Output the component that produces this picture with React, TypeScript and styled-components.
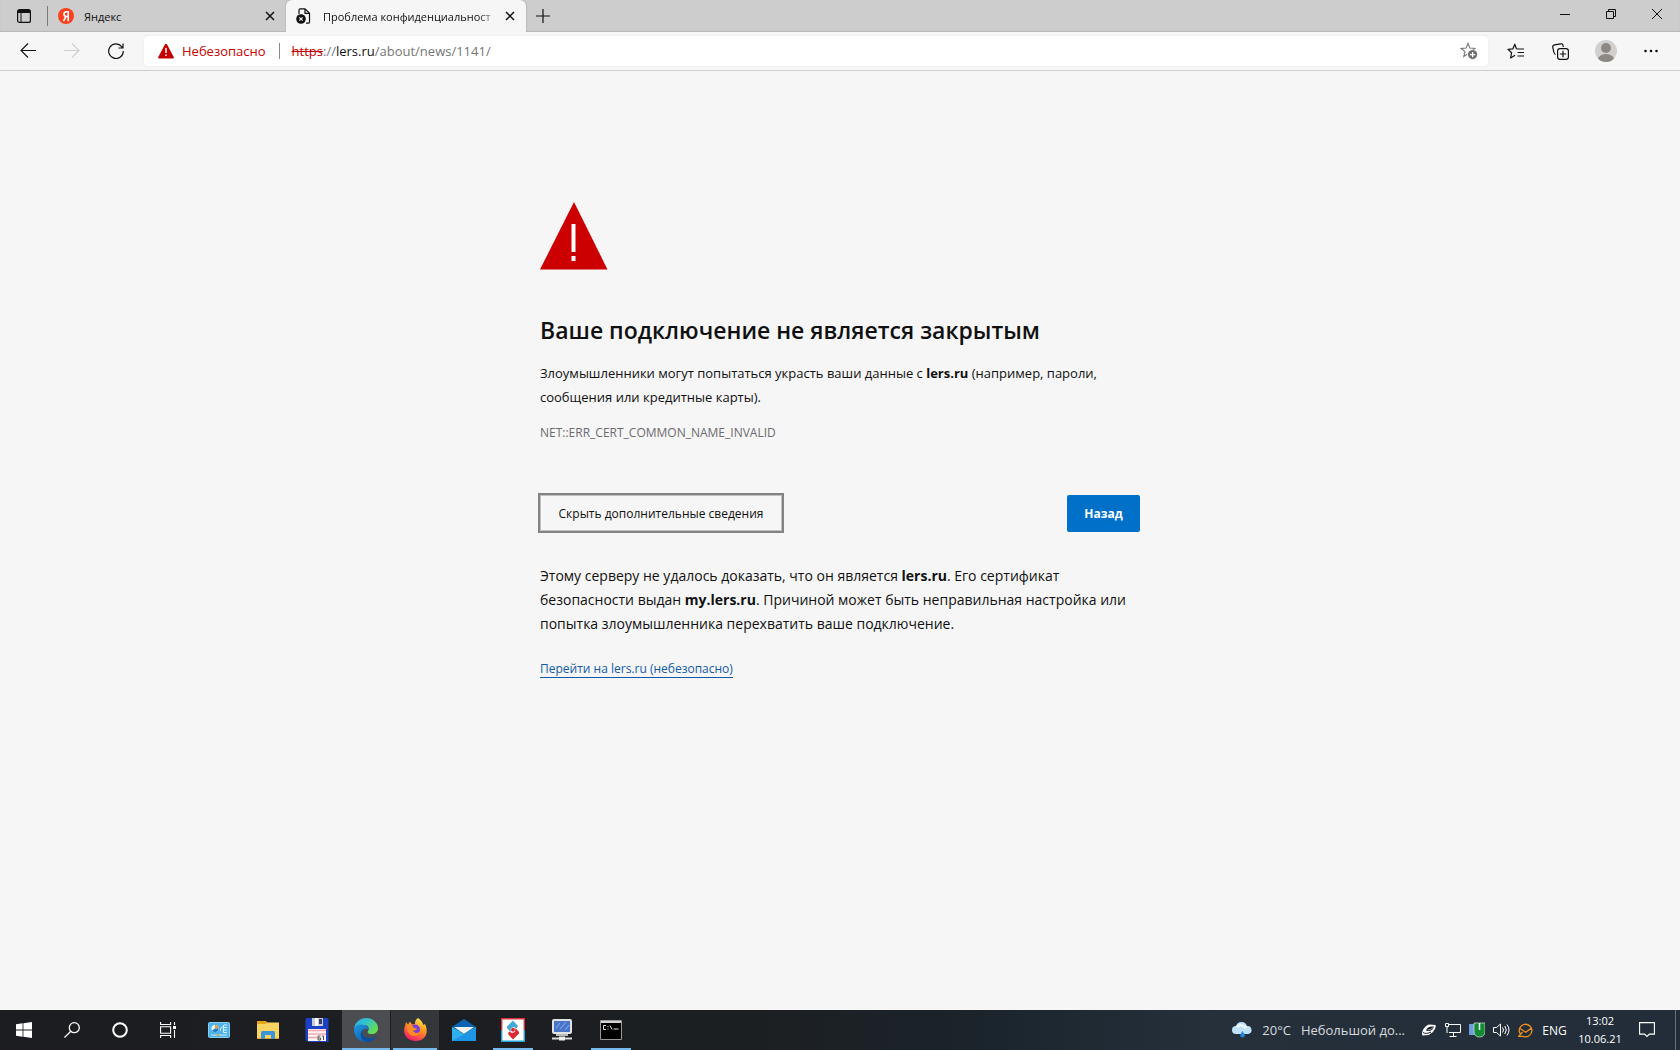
import React from "react";
import styled, { createGlobalStyle } from "styled-components";

const ui = '"Open Sans", "Noto Sans", sans-serif';

const GlobalStyle = createGlobalStyle`
  *, *::before, *::after { box-sizing: border-box; }
  body { margin: 0; background: #f6f6f6; font-family: ${ui}; color: #101010; }
  button { font: inherit; color: inherit; border: 0; padding: 0; background: none; cursor: default; }
  svg { display: block; flex: none; }
  p, h1 { margin: 0; }
`;

const Screen = styled.div`
  min-height: 100vh;
  display: flex;
  flex-direction: column;
`;

/* Tab strip */
const TabStrip = styled.header`
  display: flex;
  height: 32px;
  background: #cdcdcd;
  box-shadow: inset 0 -1px 1px #b9b9b9;
`;

const TabMenu = styled.button`
  display: grid;
  place-items: center;
  width: 48px;
  position: relative;
  &::after {
    content: "";
    position: absolute;
    right: 0;
    top: 6px;
    height: 20px;
    width: 1px;
    background: #7a7a7a;
  }
`;

const Tab = styled.div<{ $active?: boolean }>`
  display: flex;
  align-items: center;
  width: ${(p) => (p.$active ? 240 : 238)}px;
  padding: 0 8px 0 10px;
  border-radius: 6px 6px 0 0;
  background: ${(p) => (p.$active ? "#f6f6f6" : "transparent")};
  box-shadow: ${(p) => (p.$active ? "0 0 2px #999" : "none")};
`;

const TabLabel = styled.button<{ $fade?: boolean }>`
  display: flex;
  align-items: center;
  gap: ${(p) => (p.$fade ? 11 : 10)}px;
  flex: 1;
  min-width: 0;
  height: 100%;
  font-size: 11px;
  white-space: nowrap;
  overflow: hidden;
  text-align: left;
  ${(p) => p.$fade && "mask-image: linear-gradient(90deg, #000 calc(100% - 24px), transparent calc(100% - 2px));"}
`;

const IconButton = styled.button<{ $w: number }>`
  display: grid;
  place-items: center;
  flex: none;
  width: ${(p) => p.$w}px;
  height: 100%;
`;

const WindowControls = styled.div`
  display: flex;
  height: 28px;
  margin-left: auto;
`;

/* Toolbar */
const Toolbar = styled.nav`
  display: flex;
  align-items: center;
  height: 39px;
  padding: 0 7px 0 6px;
  background: #f6f6f6;
  border-bottom: 1px solid #d0d0d0;
`;

const AddressBar = styled.div`
  display: flex;
  align-items: center;
  flex: 1;
  height: 30px;
  margin: 0 5px 0 6px;
  padding: 0 5px 0 14px;
  border-radius: 4px;
  background: #fff;
  box-shadow: 0 0 2px #e2e2e2;
  font-size: 13px;
`;

const Unsafe = styled.button`
  display: flex;
  align-items: center;
  gap: 8px;
  padding-right: 13px;
  border-right: 1px solid #8a8a8a;
  line-height: 16px;
  color: #c50000;
`;

const Url = styled.div`
  flex: 1;
  padding-left: 12px;
  color: #767676;
  outline: none;
  s { color: #c50000; }
  b { color: #101010; font-weight: 400; }
`;

/* Interstitial page */
const Main = styled.main`
  flex: 1;
  padding: 131px 24px 48px;
  background: #f6f6f6;
`;

const Article = styled.article`
  max-width: 600px;
  margin: 0 auto;
`;

const Title = styled.h1`
  margin-top: 44px;
  font-size: 23px;
  line-height: 32px;
  font-weight: 600;
`;

const Lead = styled.p`
  margin-top: 15px;
  font-size: 13px;
  line-height: 24px;
`;

const ErrorCode = styled.p`
  margin-top: 12px;
  font-size: 12px;
  line-height: 24px;
  color: #6b6b70;
`;

const Actions = styled.div`
  display: flex;
  justify-content: space-between;
  margin-top: 50px;
`;

const DetailsButton = styled.button`
  height: 36px;
  width: 242px;
  border: 1px solid #c0c0c0;
  outline: 2px solid #838383;
  font-size: 12px;
`;

const BackButton = styled.button`
  height: 37px;
  width: 73px;
  border-radius: 2px;
  background: #0070c9;
  color: #fff;
  font-size: 12px;
  font-weight: 700;
`;

const Details = styled.p`
  margin-top: 32px;
  font-size: 14px;
  line-height: 24px;
`;

const Proceed = styled.a`
  display: inline-block;
  margin-top: 24px;
  font-size: 12px;
  line-height: 17px;
  color: #105aa8;
  text-decoration: none;
  border-bottom: 1px solid #105aa8;
`;

/* Taskbar */
const Taskbar = styled.footer`
  display: flex;
  height: 40px;
  background: linear-gradient(90deg, #1c1d20 0%, #1c1f22 45%, #1b242b 58%, #25303b 72%, #222d39 100%);
  color: #fff;
`;

const Group = styled.div<{ $gap?: number; $left?: number }>`
  display: flex;
  gap: ${(p) => p.$gap ?? 0}px;
  margin-left: ${(p) => p.$left ?? 0}px;
`;

const TaskButton = styled.button<{ $bg?: string; $line?: number }>`
  position: relative;
  display: grid;
  place-items: center;
  width: 48px;
  height: 40px;
  background: ${(p) => p.$bg ?? "transparent"};
  &::after {
    content: "";
    position: absolute;
    bottom: 0;
    left: calc(50% - ${(p) => (p.$line ?? 0) / 2}px);
    width: ${(p) => p.$line ?? 0}px;
    height: 2px;
    background: #76b9ed;
  }
`;

const Tray = styled.div`
  display: flex;
  align-items: center;
  margin-left: auto;
  font-size: 12px;
`;

const Weather = styled.button`
  display: flex;
  align-items: center;
  gap: 10px;
  margin-right: 12px;
  font-size: 13px;
  color: #d9dcdf;
`;

const Clock = styled.time`
  width: 56px;
  text-align: center;
  font-size: 11px;
  line-height: 18px;
`;

const ShowDesktop = styled.button`
  width: 5px;
  height: 40px;
  margin-left: 9px;
  border-left: 1px solid #66707a;
`;

const star = "M8 1.5 9.9 6.1 14.8 6.5 11 9.6 12.2 14.5 8 11.8 3.8 14.5 5 9.6 1.2 6.5 6.1 6.1Z";

const Close = () => (
  <svg width="10" height="10" viewBox="0 0 10 10" stroke="#111" strokeWidth="1.5"><path d="M1 1 9 9M9 1 1 9" /></svg>
);

function Tabs() {
  return (
    <TabStrip>
      <TabMenu aria-label="Меню вкладок">
        <svg width="14" height="14" viewBox="0 0 14 14"><rect x=".6" y=".6" width="12.8" height="12.8" rx="2" fill="none" stroke="#111" strokeWidth="1.2" /><path d="M1 1h12v3H1z" fill="#111" /><path d="M4 4v9" stroke="#111" /></svg>
      </TabMenu>
      <Tab>
        <TabLabel>
          <svg width="16" height="16" viewBox="0 0 16 16"><circle cx="8" cy="8" r="8" fill="#fc3f1d" /><path d="M10.2 3v10.2M10.2 3.7H8.5c-3.3 0-3.3 4.8 0 4.8h1.7M8 8.5 5.5 13.2" fill="none" stroke="#fff" strokeWidth="1.6" /></svg>
          Яндекс
        </TabLabel>
        <IconButton $w={16} aria-label="Закрыть"><Close /></IconButton>
      </Tab>
      <Tab $active>
        <TabLabel $fade>
          <svg width="16" height="16" viewBox="0 0 16 16"><path d="M3 6V2.2C3 1.4 3.4.8 4.2.8H9l4.5 4.5v8.6c0 .8-.5 1.3-1.3 1.3H10M9 .8v4.5h4.5" fill="none" stroke="#111" strokeWidth="1.2" /><circle cx="5" cy="11" r="4.8" fill="#111" /><path d="m3.3 9.3 3.4 3.4m0-3.4-3.4 3.4" stroke="#f6f6f6" strokeWidth="1.1" /></svg>
          Проблема конфиденциальност
        </TabLabel>
        <IconButton $w={16} aria-label="Закрыть"><Close /></IconButton>
      </Tab>
      <IconButton $w={34} aria-label="Новая вкладка">
        <svg width="14" height="14" viewBox="0 0 14 14" stroke="#111" strokeWidth="1.2"><path d="M7 0v14M0 7h14" /></svg>
      </IconButton>
      <WindowControls>
        <IconButton $w={46} aria-label="Свернуть"><svg width="10" height="10" viewBox="0 0 10 10"><path d="M0 5.5h10" stroke="#111" /></svg></IconButton>
        <IconButton $w={46} aria-label="Свернуть в окно"><svg width="10" height="10" viewBox="0 0 10 10" fill="none" stroke="#111"><path d="M.5 2.5h7v7h-7zM2.5 2.5v-2h7v7h-2" /></svg></IconButton>
        <IconButton $w={46} aria-label="Закрыть окно"><svg width="10" height="10" viewBox="0 0 10 10"><path d="m0 0 10 10M10 0 0 10" stroke="#111" /></svg></IconButton>
      </WindowControls>
    </TabStrip>
  );
}

function Navigation() {
  return (
    <Toolbar>
      <IconButton $w={44} aria-label="Назад">
        <svg width="16" height="16" viewBox="0 0 16 16" fill="none" stroke="#111" strokeWidth="1.1"><path d="M16 7.500H1M8 .5l-7 7 7 7" /></svg>
      </IconButton>
      <IconButton $w={44} aria-label="Вперёд">
        <svg width="16" height="16" viewBox="0 0 16 16" fill="none" stroke="#cfcfcf" strokeWidth="1.1"><path d="M0 7.500h15M8 .5l7 7-7 7" /></svg>
      </IconButton>
      <IconButton $w={44} aria-label="Обновить">
        <svg width="16" height="16" viewBox="0 0 16 16" fill="none" stroke="#111" strokeWidth="1.2"><path d="M15.3 8A7.3 7.3 0 1 1 13.7 3.6L15 5M15 .5V5h-4.5" /></svg>
      </IconButton>
      <AddressBar>
        <Unsafe>
          <svg width="16" height="16" viewBox="0 0 16 16"><path d="M7 1.3Q8 0 9 1.3L15.7 14Q16.2 15.4 15 15.5H1Q-.2 15.4.3 14Z" fill="#c50000" /><path d="M8 5v5M8 11.5v1.6" stroke="#fff" strokeWidth="1.5" /></svg>
          Небезопасно
        </Unsafe>
        <Url role="textbox" aria-label="Адрес" contentEditable suppressContentEditableWarning>
          <s>https</s>://<b>lers.ru</b>/about/news/1141/
        </Url>
        <IconButton $w={28} aria-label="В избранное">
          <svg width="18" height="18" viewBox="0 0 18 18"><path d={star} fill="none" stroke="#767676" strokeWidth="1.1" /><circle cx="12.6" cy="12.6" r="5.2" fill="#fff" /><circle cx="12.6" cy="12.6" r="4.6" fill="#707070" /><path d="M12.6 10v5.2M10 12.6h5.2" stroke="#fff" strokeWidth="1.2" /></svg>
        </IconButton>
      </AddressBar>
      <IconButton $w={45} aria-label="Избранное">
        <svg width="17" height="17" viewBox="0 0 17 17" fill="none" stroke="#111" strokeWidth="1.2"><path d="M9.5 6 7.8 1.2 5.8 5.9 1 6.4l3.6 3.3-1 5.3L8 12.2" strokeLinejoin="round" /><path d="M9.5 6H17M10.5 9.5H17M10.5 13H17" /></svg>
      </IconButton>
      <IconButton $w={45} aria-label="Коллекции">
        <svg width="17" height="17" viewBox="0 0 17 17" fill="none" stroke="#111" strokeWidth="1.2"><path d="M3.6 11.5C2.4 11.2 2 10 1.8 9L.8 4.4C.5 3 1.2 2.2 2.5 1.9L8.8.8c1.2-.2 2 .4 2.2 1.6l.4 1.6" /><rect x="5.6" y="5.6" width="10.8" height="10.8" rx="2.4" /><path d="M11 7.8v6.4M7.8 11h6.4" /></svg>
      </IconButton>
      <IconButton $w={45} aria-label="Профиль">
        <svg width="22" height="22" viewBox="0 0 22 22"><clipPath id="avatar"><circle cx="11" cy="11" r="11" /></clipPath><g clipPath="url(#avatar)"><path d="M0 0h22v22H0z" fill="#d2d0ce" /><circle cx="11" cy="8" r="5" fill="#8d8884" /><ellipse cx="11" cy="20" rx="8.3" ry="6" fill="#8d8884" /></g></svg>
      </IconButton>
      <IconButton $w={45} aria-label="Параметры">
        <svg width="14" height="4" viewBox="0 0 14 4" fill="#111"><circle cx="1.5" cy="2" r="1.3" /><circle cx="7" cy="2" r="1.3" /><circle cx="12.5" cy="2" r="1.3" /></svg>
      </IconButton>
    </Toolbar>
  );
}

function Warning() {
  return (
    <Main>
      <Article>
        <svg width="68" height="68" viewBox="0 0 68 68"><path d="M34 0 67.5 67.5H0Z" fill="#c00" /><path d="M31.5 22h4v28h-4zM31.5 54h4v5h-4z" fill="#fff" /></svg>
        <Title>Ваше подключение не является закрытым</Title>
        <Lead>Злоумышленники могут попытаться украсть ваши данные с <b>lers.ru</b> (например, пароли, сообщения или кредитные карты).</Lead>
        <ErrorCode>NET::ERR_CERT_COMMON_NAME_INVALID</ErrorCode>
        <Actions>
          <DetailsButton>Скрыть дополнительные сведения</DetailsButton>
          <BackButton>Назад</BackButton>
        </Actions>
        <Details>Этому серверу не удалось доказать, что он является <b>lers.ru</b>. Его сертификат безопасности выдан <b>my.lers.ru</b>. Причиной может быть неправильная настройка или попытка злоумышленника перехватить ваше подключение.</Details>
        <Proceed href="#">Перейти на lers.ru (небезопасно)</Proceed>
      </Article>
    </Main>
  );
}

function Desktop() {
  return (
    <Taskbar>
      <Group>
        <TaskButton aria-label="Пуск">
          <svg width="16" height="16" viewBox="0 0 16 16" fill="#fff"><path d="M0 2.2 6.6 1.3v6.3H0zM7.4 1.2 16 0v7.6H7.4zM0 8.4h6.6v6.3L0 13.8zM7.4 8.4H16V16l-8.6-1.2z" /></svg>
        </TaskButton>
        <TaskButton aria-label="Поиск">
          <svg width="16" height="16" viewBox="0 0 16 16" fill="none" stroke="#fff" strokeWidth="1.3"><circle cx="10.3" cy="5.7" r="5" /><path d="M6.8 9.2.5 15.5" /></svg>
        </TaskButton>
        <TaskButton aria-label="Кортана">
          <svg width="16" height="16" viewBox="0 0 16 16"><circle cx="8" cy="8" r="6.8" fill="none" stroke="#fff" strokeWidth="2" /></svg>
        </TaskButton>
        <TaskButton aria-label="Представление задач">
          <svg width="16" height="16" viewBox="0 0 16 16" fill="none" stroke="#fff" strokeWidth="1.1"><path d="M.6 0v2.5h10V0M.6 16v-2.5h10V16M.6 4.8h10v6.4H.6zM14.5 0v3M14.5 8v8" /><path d="M13 4h3v3h-3z" fill="#fff" stroke="none" /></svg>
        </TaskButton>
      </Group>
      <Group $gap={1} $left={3}>
        <TaskButton aria-label="Панель управления">
          <svg width="22" height="16" viewBox="0 0 22 16"><rect x=".5" y=".5" width="21" height="15" rx="1" fill="#4fb4ea" stroke="#86d0f4" /><circle cx="7" cy="6.5" r="3.600" fill="#e4f5ff" /><path d="M7 6.5V2.9a3.600 3.600 0 0 1 3.600 3.600z" fill="#f09a28" /><path d="M7 6.5h3.600a3.600 3.600 0 0 1-6.600 2z" fill="#247fc7" /><path d="M12.500 8.500v-2l3.500-3M16 3h3M15.500 5.500H19M15.500 8H19M15.500 3v7.500H19" fill="none" stroke="#d9f1ff" /><path d="M3 13h6M11 13h8" stroke="#c8eaff" /><path d="M9 13h2" stroke="#f09a28" strokeWidth="2" /></svg>
        </TaskButton>
        <TaskButton aria-label="Проводник">
          <svg width="22" height="18" viewBox="0 0 22 18"><path d="M0 0h9l1.5 2H22v16H0z" fill="#e8a317" /><path d="M0 3h9l1-1.5h12V17H0z" fill="#fcd462" /><path d="M4 18v-6.5Q4 10 5.5 10h11Q18 10 18 11.5V18h-4v-4H8v4z" fill="#3c95db" /></svg>
        </TaskButton>
        <TaskButton aria-label="Total Commander">
          <svg width="24" height="24" viewBox="0 0 24 24"><path d="M2 0h20q1.5 0 1.5 1.5V24H3L.5 22V1.5Q.5 0 2 0z" fill="#1c40c6" /><path d="M7 0h11v8H7z" fill="#cdcdd0" /><path d="M10 0h3v8h-3z" fill="#fff" /><path d="M14 1h3v5h-3z" fill="#33405e" /><path d="M3 11h18v12H3z" fill="#fff5f5" /><path d="M3 12.5h18M3 16h18M3 19.5h9" stroke="#f3a6ae" strokeWidth="1.6" /><path d="M15.500 18H13v4h2.500v-2H13M17 18h1.500v4" fill="none" stroke="#555" /></svg>
        </TaskButton>
        <TaskButton $bg="#4b4d51" $line={48} aria-label="Microsoft Edge">
          <svg width="24" height="24" viewBox="0 0 24 24"><defs><linearGradient id="edgeTop" x1="0" y1="0" x2="1" y2=".6"><stop stopColor="#28aee8" /><stop offset=".5" stopColor="#34c4c9" /><stop offset="1" stopColor="#68df4c" /></linearGradient><linearGradient id="edgeSide" x1="0" y1="0" x2=".6" y2="1"><stop stopColor="#2196dc" /><stop offset="1" stopColor="#0d66b8" /></linearGradient></defs><path d="M0 11C1 4 6 0 12 0c7 0 12 5 12 10 0 4-3 6-6 6-4 0-5-1.500-4-3C16 10 14 7 10 7 5 7 1 9 0 11z" fill="url(#edgeTop)" /><path d="M0 12C0 8 4 6 8 6.500c4 .2 7 3 6.500 5.500C13 10 9 10.500 8 14c-1 5 3 9 8 9.300C8 26 0 20 0 12z" fill="url(#edgeSide)" /><path d="M9 12c-2 5 2 8 7 8 3 0 5-1.200 6.500-2C20 22 17 24 13.500 24 9 23.500 6.500 20 6.700 16.500 6.800 14.500 7.500 13 9 12z" fill="#0c4f9c" /></svg>
        </TaskButton>
        <TaskButton $bg="#34373a" $line={44} aria-label="Firefox">
          <svg width="24" height="24" viewBox="0 0 24 24"><defs><linearGradient id="fox" x1=".8" y1="0" x2=".3" y2="1"><stop stopColor="#fff04a" /><stop offset=".45" stopColor="#ff9124" /><stop offset="1" stopColor="#f5156c" /></linearGradient></defs><path d="M15 0c4 3 4 4 5.500 7l1.500-1c4 8 1 17-9.500 17C4 23-1 16 2 8l1-4 2 2.500 2-3 2 3 3-.5c0-3 .5-4 3-6z" fill="url(#fox)" /><circle cx="12" cy="11.500" r="5" fill="#7741d8" /><path d="M4 8c3-1 6-1 7 2l3 .5c-.500 2-3 2-4 2 1 3 5 3 7.500 1-1 5-8.500 6-11.500 2-2-2-2-5-2-7.500z" fill="#ff8b22" /></svg>
        </TaskButton>
        <TaskButton aria-label="Почта">
          <svg width="24" height="24" viewBox="0 0 24 24"><path d="M0 9 12 1l12 8v5H0z" fill="#0963b5" /><path d="M2 9h20l-10 7z" fill="#f4f4f4" /><path d="M0 9l12 7 12-7v14H0z" fill="#2eb0ee" /><path d="M0 23 24 9v14z" fill="#1e95e4" /></svg>
        </TaskButton>
        <TaskButton $line={40} aria-label="ЛЭРС">
          <svg width="24" height="24" viewBox="0 0 24 24"><path d="M0 0h24v24H0z" fill="#fff" /><path d="M.7 12V.7h22.600V12" fill="none" stroke="#d9343b" strokeWidth="1.400" /><path d="M.7 12v11.300h22.600V12" fill="none" stroke="#26a4d9" strokeWidth="1.400" /><path d="m12 2.500 5 5.500-1.500 2.500L13 9l-3 1-.500 4L6 10V8.500z" fill="#43a9d6" /><path d="m12 21.500-5-5.500 1-2.500 3 1.500 3-1 .500-4L18 14v1.500z" fill="#dc2830" /><circle cx="12" cy="11.800" r="2" fill="#dc2830" /></svg>
        </TaskButton>
        <TaskButton aria-label="Удалённый доступ">
          <svg width="20" height="22" viewBox="0 0 20 22"><rect x="1" y="1" width="18" height="13" rx="1" fill="#4975c9" stroke="#e2e2e2" strokeWidth="2" /><path d="m4 9 4-5M8 10l6-7M13 11l4-5" stroke="#8fb0ea" /><path d="M4 15h12v2H4z" fill="#bbb" /><path d="M0 19.500h20" stroke="#ddd" strokeWidth="2" /><path d="M7 17.500h6v4H7z" fill="#eee" /></svg>
        </TaskButton>
        <TaskButton $line={40} aria-label="Командная строка">
          <svg width="22" height="20" viewBox="0 0 22 20"><path d="M.5.500h21v19H.5z" fill="#000" stroke="#999" /><path d="M1 1h20v2H1z" fill="#d4d4d4" /><path d="M6 5.500H3.500v4H6M8 6v1M8 8.500v1M10 5.500l2 4M13.500 9h5" fill="none" stroke="#ddd" /></svg>
        </TaskButton>
      </Group>
      <Tray>
        <Weather>
          <svg width="20" height="16" viewBox="0 0 20 16"><path d="M4 12a4 4 0 0 1 0-8A5.800 5.800 0 0 1 15 4a4 4 0 0 1 1 8z" fill="#c0e2fa" /><path d="M5 5q4-4 9 1" fill="none" stroke="#f3faff" strokeWidth="2.500" /><path d="M10.500 9q4.500 6 0 6.500-4.500-.5 0-6.500z" fill="#2684dc" /></svg>
          <span>20°C</span>
          <span>Небольшой до...</span>
        </Weather>
        <IconButton $w={24} aria-label="Служба">
          <svg width="16" height="14" viewBox="0 0 16 14"><path d="M1.500 12.500C-.5 9 4 2.500 8 1.500l6.500.5c1 4-3 8-7 10z" fill="#fff" /><path d="M5 7.500C6 4 9 3 13 3.500c-1 3.500-4 5.500-8 4z" fill="#161d24" /><path d="M2 9.500c2 1.500 5 1 8-.5" stroke="#161d24" fill="none" /><path d="M6.500 7c2 0 4-1 5.500-2.500" stroke="#aab" fill="none" /></svg>
        </IconButton>
        <IconButton $w={24} aria-label="Сеть">
          <svg width="16" height="14" viewBox="0 0 16 14" fill="none" stroke="#fff"><path d="M4 1.500h11.500v8H4M8.500 9.500v4M4.500 13.500h7M.5.500h3v3h-3zM2 4v6" /></svg>
        </IconButton>
        <IconButton $w={24} aria-label="Устройство">
          <svg width="16" height="16" viewBox="0 0 16 16"><path d="M0 2h6v11H0z" fill="#719bdc" /><path d="M5 1h11v8q0 6-5.500 6T5 9z" fill="#138b35" stroke="#d6e8da" strokeWidth=".7" /><path d="M10.500 1v7" stroke="#fff" strokeWidth="1.500" /></svg>
        </IconButton>
        <IconButton $w={24} aria-label="Звук">
          <svg width="17" height="14" viewBox="0 0 17 14" fill="none" stroke="#fff"><path d="M.5 4.500h3l4-3.500v12l-4-3.500h-3zM9.500 4.500q2 2.500 0 5M11.800 3q3 4 0 8M14 1.500q4 5.500 0 11" /></svg>
        </IconButton>
        <IconButton $w={24} aria-label="Сообщения">
          <svg width="15" height="15" viewBox="0 0 15 15" fill="none" stroke="#f3911e" strokeWidth="1.300"><path d="M2 10.500A6.300 6.300 0 1 1 5 13.300H.8L4.500 9M2 5.500 7.800 9.300 13.500 5" /></svg>
        </IconButton>
        <IconButton $w={35}>ENG</IconButton>
        <Clock>13:02<br />10.06.21</Clock>
        <IconButton $w={38} aria-label="Уведомления">
          <svg width="16" height="16" viewBox="0 0 16 16" fill="none" stroke="#fff" strokeWidth="1.100"><path d="M.6.600h14.800v11.500h-5L8 14.500l-2.400-2.400h-5z" /></svg>
        </IconButton>
        <ShowDesktop aria-label="Показать рабочий стол" />
      </Tray>
    </Taskbar>
  );
}

export default function App() {
  return (
    <Screen>
      <GlobalStyle />
      <Tabs />
      <Navigation />
      <Warning />
      <Desktop />
    </Screen>
  );
}
